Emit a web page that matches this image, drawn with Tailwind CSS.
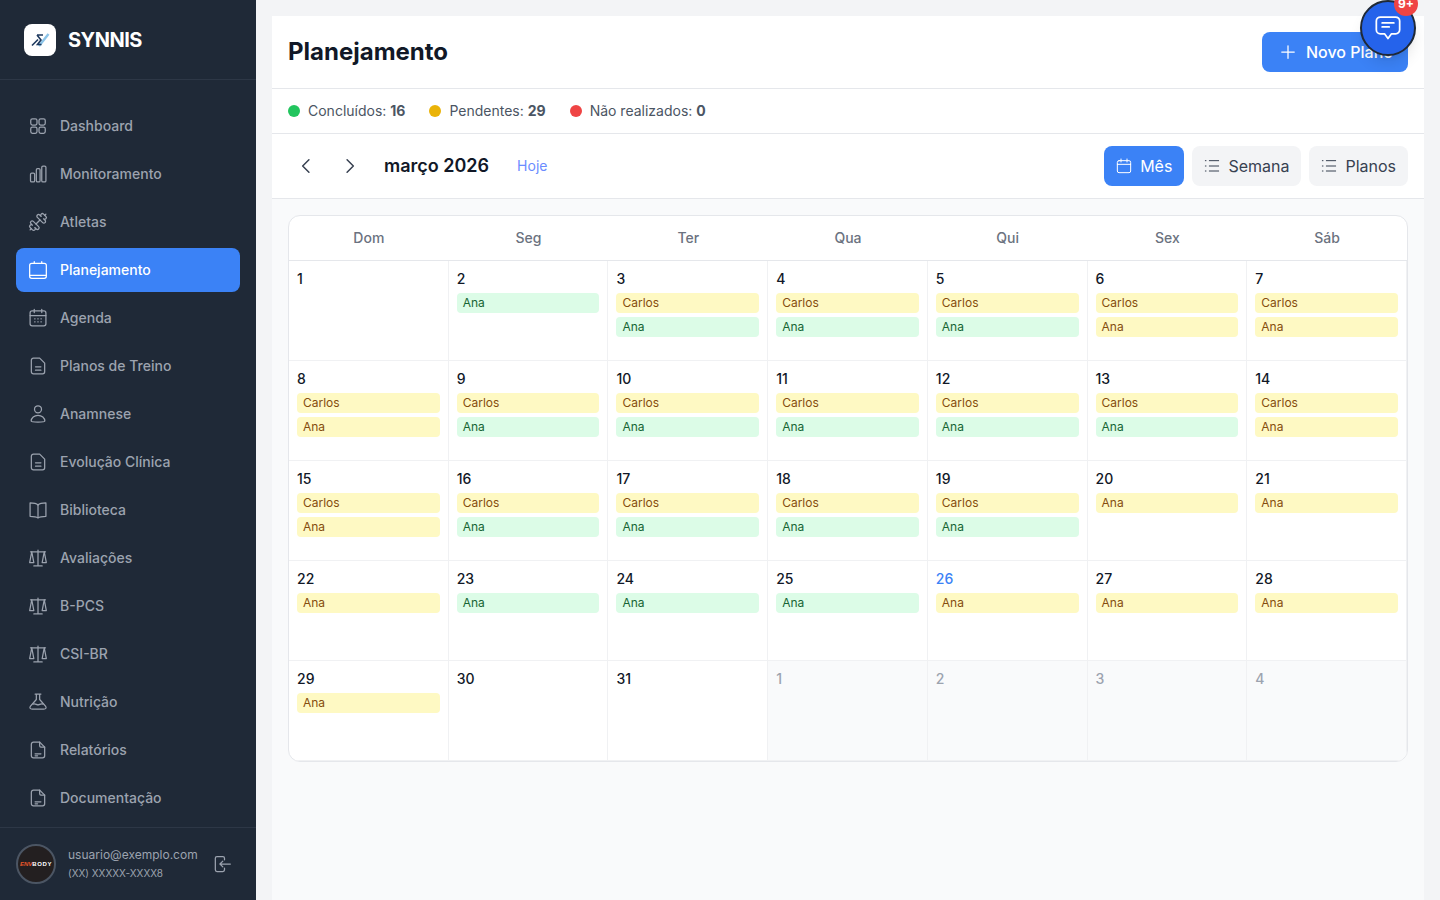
<!DOCTYPE html>
<html lang="pt-BR">
<head>
    <meta charset="UTF-8">
    <title>Planejamento</title>
    <script src="https://cdn.jsdelivr.net/npm/@tailwindcss/browser@4"></script>
</head>
<body class="h-[900px] overflow-hidden bg-gray-50 font-['Inter',sans-serif]">
<svg class="hidden">
    <symbol id="doc" viewBox="0 0 24 24" fill="none" stroke="currentColor" stroke-width="1.5" stroke-linecap="round" stroke-linejoin="round"><path d="M14 2.5H6.500A2.500 2.500 0 0 0 4 5v14a2.500 2.500 0 0 0 2.500 2.500h11A2.500 2.500 0 0 0 20 19V8.500z"/><path d="M9 13h6.500M9 17h6.500"/></symbol>
    <symbol id="report" viewBox="0 0 24 24" fill="none" stroke="currentColor" stroke-width="1.5" stroke-linecap="round" stroke-linejoin="round"><path d="M14 2.500H6.500A2.500 2.500 0 0 0 4 5v14a2.500 2.500 0 0 0 2.500 2.500h11A2.500 2.500 0 0 0 20 19V8.500z"/><path d="M14 2.500V7a1.500 1.500 0 0 0 1.500 1.500H20"/><path d="M8.500 16.500h7M8.500 19h3"/></symbol>
    <symbol id="scale" viewBox="0 0 24 24" fill="none" stroke="currentColor" stroke-width="1.5" stroke-linecap="round" stroke-linejoin="round"><path d="M12 2.500v19M7 21.500h10M3 4.500h18"/><path d="M4.500 4.500 2 17.500h5zM19.500 4.500 17 17.500h5z"/></symbol>
    <symbol id="lines" viewBox="0 0 24 24" fill="none" stroke="currentColor" stroke-width="1.5" stroke-linecap="round"><path d="M8 4h14M8 12h14M8 19.500h14"/><path d="M2 4h1M2 12h1M2 19.500h1"/></symbol>
    <symbol id="cal" viewBox="0 0 24 24" fill="none" stroke="currentColor" stroke-width="1.5" stroke-linecap="round" stroke-linejoin="round"><rect x="2" y="4" width="20" height="18" rx="2.500"/><path d="M2 9.500h20M7.500 1.500V6M16.500 1.500V6"/></symbol>
</svg>
<div class="flex h-[900px]">
    <!-- sidebar -->
    <aside class="w-64 shrink-0 flex flex-col bg-[#1f2937]">
        <div class="h-20 shrink-0 flex items-center gap-3 px-6 border-b border-[#2d3746]">
            <div class="w-8 h-8 rounded-lg bg-white flex items-center justify-center">
                <svg class="w-5 h-5" viewBox="0 0 20 20" fill="none" stroke-width="1.6"><path d="M18.500 4 9 16" stroke="#8cc4e8" stroke-width="2.400"/><path d="M2 15.500 8 9.500M7 5h6M7 5l4 5-3.500 4.500h4" stroke="#1f3a5f"/></svg>
            </div>
            <span class="text-xl font-bold text-white tracking-[-0.5px]">SYNNIS</span>
        </div>
        <nav class="flex-1 pt-6 px-4 flex flex-col gap-1 text-sm font-medium text-[#9ca3af]">
            <a class="h-11 flex items-center gap-3 px-3 rounded-lg">
                <svg class="w-5 h-5" viewBox="0 0 24 24" fill="none" stroke="currentColor" stroke-width="1.5"><rect x="3.300" y="3.300" width="7.500" height="7.500" rx="2"/><rect x="13.200" y="3.300" width="7.500" height="7.500" rx="2"/><rect x="3.300" y="13.200" width="7.500" height="7.500" rx="2"/><rect x="13.200" y="13.200" width="7.500" height="7.500" rx="2"/></svg>
                Dashboard</a>
            <a class="h-11 flex items-center gap-3 px-3 rounded-lg">
                <svg class="w-5 h-5" viewBox="0 0 24 24" fill="none" stroke="currentColor" stroke-width="1.5"><rect x="3" y="11" width="5" height="10.500" rx="1.500"/><rect x="10" y="5.500" width="4.500" height="16" rx="1.500"/><rect x="16.500" y="2.500" width="5" height="19" rx="1.500"/></svg>
                Monitoramento</a>
            <a class="h-11 flex items-center gap-3 px-3 rounded-lg">
                <svg class="w-5 h-5" viewBox="0 0 24 24" fill="none" stroke="currentColor" stroke-width="1.5" stroke-linecap="round" stroke-linejoin="round"><path d="M17.596 12.768a2 2 0 1 0 2.829-2.829l-1.768-1.767a2 2 0 0 0 2.828-2.829l-2.828-2.828a2 2 0 0 0-2.829 2.828l-1.767-1.768a2 2 0 1 0-2.829 2.829z"/><path d="m2.500 21.500 1.400-1.400"/><path d="m20.100 3.900 1.400-1.400"/><path d="M5.343 21.485a2 2 0 1 0 2.829-2.828l1.767 1.768a2 2 0 1 0 2.829-2.829l-6.364-6.364a2 2 0 1 0-2.829 2.829l1.768 1.767a2 2 0 0 0-2.828 2.829z"/><path d="m9.600 14.400 4.800-4.800"/></svg>
                Atletas</a>
            <a class="h-11 flex items-center gap-3 px-3 rounded-lg bg-[#3b82f6] text-white">
                <svg class="w-5 h-5" viewBox="0 0 24 24" fill="none" stroke="currentColor" stroke-width="1.5" stroke-linecap="round"><rect x="2" y="4" width="20" height="18" rx="2.500"/><path d="M2 18.500h20M7.500 2v2M16.500 2v2"/></svg>
                Planejamento</a>
            <a class="h-11 flex items-center gap-3 px-3 rounded-lg">
                <svg class="w-5 h-5" viewBox="0 0 24 24" fill="none" stroke="currentColor" stroke-width="1.5" stroke-linecap="round"><rect x="2.500" y="3.500" width="19" height="18" rx="2.500"/><path d="M2.500 9h19M7.500 1.500v4M16.500 1.500v4M8 13h.5M11.750 13h.5M15.500 13h.5M8 16.500h.5M11.750 16.500h.5M15.500 16.500h.5"/></svg>
                Agenda</a>
            <a class="h-11 flex items-center gap-3 px-3 rounded-lg"><svg class="w-5 h-5"><use href="#doc"/></svg>Planos de Treino</a>
            <a class="h-11 flex items-center gap-3 px-3 rounded-lg">
                <svg class="w-5 h-5" viewBox="0 0 24 24" fill="none" stroke="currentColor" stroke-width="1.5"><circle cx="12" cy="6.300" r="4.200"/><path d="M3.800 20.500c0-4 3.700-7 8.200-7s8.200 3 8.200 7c0 .7-3.700 1.300-8.200 1.300s-8.200-.6-8.200-1.300z" stroke-linejoin="round"/></svg>
                Anamnese</a>
            <a class="h-11 flex items-center gap-3 px-3 rounded-lg"><svg class="w-5 h-5"><use href="#doc"/></svg>Evolução Clínica</a>
            <a class="h-11 flex items-center gap-3 px-3 rounded-lg">
                <svg class="w-5 h-5" viewBox="0 0 24 24" fill="none" stroke="currentColor" stroke-width="1.5" stroke-linejoin="round"><path d="M12 6C10 4 6.500 3.500 2.500 3.500v16c4 0 7.500.5 9.500 2 2-1.500 5.500-2 9.500-2v-16C17.500 3.500 14 4 12 6z"/><path d="M12 6v15.500"/></svg>
                Biblioteca</a>
            <a class="h-11 flex items-center gap-3 px-3 rounded-lg"><svg class="w-5 h-5"><use href="#scale"/></svg>Avaliações</a>
            <a class="h-11 flex items-center gap-3 px-3 rounded-lg"><svg class="w-5 h-5"><use href="#scale"/></svg>B-PCS</a>
            <a class="h-11 flex items-center gap-3 px-3 rounded-lg"><svg class="w-5 h-5"><use href="#scale"/></svg>CSI-BR</a>
            <a class="h-11 flex items-center gap-3 px-3 rounded-lg">
                <svg class="w-5 h-5" viewBox="0 0 24 24" fill="none" stroke="currentColor" stroke-width="1.5" stroke-linecap="round" stroke-linejoin="round"><path d="M8.500 2.500h7M10 2.500V9l-7 8c-1.500 2 -.5 3.500 2 3.500h14c2.500 0 3.500-1.500 2-3.500l-7-8V2.500"/><path d="M6 14.500c3-1 4 1 6 1s3-2 6-1"/></svg>
                Nutrição</a>
            <a class="h-11 flex items-center gap-3 px-3 rounded-lg"><svg class="w-5 h-5"><use href="#report"/></svg>Relatórios</a>
            <a class="h-11 flex items-center gap-3 px-3 rounded-lg"><svg class="w-5 h-5"><use href="#report"/></svg>Documentação</a>
        </nav>
        <div class="h-[73px] shrink-0 border-t border-[#2d3746] flex items-center px-4">
            <div class="w-10 h-10 rounded-full bg-[#231f20] border-2 border-[#4b5563] flex items-center justify-center text-[6px] leading-none font-black font-['Liberation_Sans',sans-serif] text-white overflow-hidden"><span class="italic text-[#e8572a]">ENV</span><span class="tracking-[0.6px]">BODY</span></div>
            <div class="ml-3 text-[#9ca3af]">
                <div class="text-xs leading-4">usuario@exemplo.com</div>
                <div class="text-[10px] leading-4 mt-0.5">(XX) XXXXX-XXXX8</div>
            </div>
            <svg class="w-5 h-5 ml-auto mr-2 text-[#9ca3af]" viewBox="0 0 24 24" fill="none" stroke="currentColor" stroke-width="1.5" stroke-linecap="round" stroke-linejoin="round"><path d="M15 7V5a2 2 0 0 0-2-2H6a2 2 0 0 0-2 2v14a2 2 0 0 0 2 2h7a2 2 0 0 0 2-2v-2"/><path d="M22 12H10M13 8.500 9.500 12l3.500 3.500"/></svg>
        </div>
    </aside>

    <!-- main -->
    <main class="relative flex-1 min-w-0 bg-[#f3f4f6] p-4 pb-0">
        <div class="h-full bg-gray-50 flex flex-col">
            <header class="h-[73px] shrink-0 bg-white border-b border-[#e5e7eb] flex items-center justify-between px-4">
                <h1 class="text-2xl font-bold text-[#111827]">Planejamento</h1>
                <button class="h-10 w-[146px] pl-4 rounded-lg bg-[#3b82f6] text-white flex items-center gap-2 font-medium whitespace-nowrap">
                    <svg class="w-5 h-5" viewBox="0 0 24 24" fill="none" stroke="currentColor" stroke-width="1.5" stroke-linecap="round"><path d="M12 4.500v15M4.500 12h15"/></svg>
                    Novo Plano</button>
            </header>
            <div class="h-[45px] shrink-0 bg-white border-b border-[#e5e7eb] flex items-center gap-6 px-4 text-sm text-[#4b5563]">
                <div class="flex items-center gap-2"><span class="w-3 h-3 rounded-full bg-[#22c55e]"></span><span>Concluídos: <b class="font-bold">16</b></span></div>
                <div class="flex items-center gap-2"><span class="w-3 h-3 rounded-full bg-[#eab308]"></span><span>Pendentes: <b class="font-bold">29</b></span></div>
                <div class="flex items-center gap-2"><span class="w-3 h-3 rounded-full bg-[#ef4444]"></span><span>Não realizados: <b class="font-bold">0</b></span></div>
            </div>
            <div class="h-[65px] shrink-0 bg-white border-b border-[#e5e7eb] flex items-center px-4">
                <button class="w-9 h-9 flex items-center justify-center text-[#374151]">
                    <svg class="w-5 h-5" viewBox="0 0 24 24" fill="none" stroke="currentColor" stroke-width="1.8" stroke-linecap="round" stroke-linejoin="round"><path d="M15.500 4.500 8 12l7.500 7.500"/></svg></button>
                <button class="w-9 h-9 ml-2 flex items-center justify-center text-[#374151]">
                    <svg class="w-5 h-5" viewBox="0 0 24 24" fill="none" stroke="currentColor" stroke-width="1.8" stroke-linecap="round" stroke-linejoin="round"><path d="M8.500 4.500 16 12l-7.500 7.500"/></svg></button>
                <h2 class="ml-4 text-lg font-semibold text-[#111827]">março 2026</h2>
                <a class="ml-7 text-sm text-[#6b8cff]">Hoje</a>
                <div class="ml-auto flex gap-2">
                    <button class="h-10 px-3 rounded-lg bg-[#3b82f6] text-white flex items-center gap-2"><svg class="w-4 h-4"><use href="#cal"/></svg>Mês</button>
                    <button class="h-10 px-3 rounded-lg bg-[#f3f4f6] text-[#374151] flex items-center gap-2"><svg class="w-4 h-4"><use href="#lines"/></svg>Semana</button>
                    <button class="h-10 px-3 rounded-lg bg-[#f3f4f6] text-[#374151] flex items-center gap-2"><svg class="w-4 h-4"><use href="#lines"/></svg>Planos</button>
                </div>
            </div>
            <div class="p-4">
                <div id="calendar" class="bg-white rounded-xl border border-[#e5e7eb] overflow-hidden">
                    <div class="grid grid-cols-7 h-[45px] border-b border-[#e5e7eb] text-sm font-medium text-[#6b7280] text-center items-center">
                        <div>Dom</div><div>Seg</div><div>Ter</div><div>Qua</div><div>Qui</div><div>Sex</div><div>Sáb</div>
                    </div>
                    <div class="grid grid-cols-7 text-sm font-medium text-[#111827]">
                        <!-- week 1 -->
                        <div class="h-[100px] border-r border-b border-[#f0f1f3] p-2">1</div>
                        <div class="h-[100px] border-r border-b border-[#f0f1f3] p-2">2<div class="mt-1 h-5 rounded bg-[#dcfce7] text-[#166534] font-normal text-xs leading-5 px-1.5">Ana</div></div>
                        <div class="h-[100px] border-r border-b border-[#f0f1f3] p-2">3<div class="mt-1 h-5 rounded bg-[#fef9c3] text-[#854d0e] font-normal text-xs leading-5 px-1.5">Carlos</div><div class="mt-1 h-5 rounded bg-[#dcfce7] text-[#166534] font-normal text-xs leading-5 px-1.5">Ana</div></div>
                        <div class="h-[100px] border-r border-b border-[#f0f1f3] p-2">4<div class="mt-1 h-5 rounded bg-[#fef9c3] text-[#854d0e] font-normal text-xs leading-5 px-1.5">Carlos</div><div class="mt-1 h-5 rounded bg-[#dcfce7] text-[#166534] font-normal text-xs leading-5 px-1.5">Ana</div></div>
                        <div class="h-[100px] border-r border-b border-[#f0f1f3] p-2">5<div class="mt-1 h-5 rounded bg-[#fef9c3] text-[#854d0e] font-normal text-xs leading-5 px-1.5">Carlos</div><div class="mt-1 h-5 rounded bg-[#dcfce7] text-[#166534] font-normal text-xs leading-5 px-1.5">Ana</div></div>
                        <div class="h-[100px] border-r border-b border-[#f0f1f3] p-2">6<div class="mt-1 h-5 rounded bg-[#fef9c3] text-[#854d0e] font-normal text-xs leading-5 px-1.5">Carlos</div><div class="mt-1 h-5 rounded bg-[#fef9c3] text-[#854d0e] font-normal text-xs leading-5 px-1.5">Ana</div></div>
                        <div class="h-[100px] border-r border-b border-[#f0f1f3] p-2">7<div class="mt-1 h-5 rounded bg-[#fef9c3] text-[#854d0e] font-normal text-xs leading-5 px-1.5">Carlos</div><div class="mt-1 h-5 rounded bg-[#fef9c3] text-[#854d0e] font-normal text-xs leading-5 px-1.5">Ana</div></div>
                        <!-- week 2 -->
                        <div class="h-[100px] border-r border-b border-[#f0f1f3] p-2">8<div class="mt-1 h-5 rounded bg-[#fef9c3] text-[#854d0e] font-normal text-xs leading-5 px-1.5">Carlos</div><div class="mt-1 h-5 rounded bg-[#fef9c3] text-[#854d0e] font-normal text-xs leading-5 px-1.5">Ana</div></div>
                        <div class="h-[100px] border-r border-b border-[#f0f1f3] p-2">9<div class="mt-1 h-5 rounded bg-[#fef9c3] text-[#854d0e] font-normal text-xs leading-5 px-1.5">Carlos</div><div class="mt-1 h-5 rounded bg-[#dcfce7] text-[#166534] font-normal text-xs leading-5 px-1.5">Ana</div></div>
                        <div class="h-[100px] border-r border-b border-[#f0f1f3] p-2">10<div class="mt-1 h-5 rounded bg-[#fef9c3] text-[#854d0e] font-normal text-xs leading-5 px-1.5">Carlos</div><div class="mt-1 h-5 rounded bg-[#dcfce7] text-[#166534] font-normal text-xs leading-5 px-1.5">Ana</div></div>
                        <div class="h-[100px] border-r border-b border-[#f0f1f3] p-2">11<div class="mt-1 h-5 rounded bg-[#fef9c3] text-[#854d0e] font-normal text-xs leading-5 px-1.5">Carlos</div><div class="mt-1 h-5 rounded bg-[#dcfce7] text-[#166534] font-normal text-xs leading-5 px-1.5">Ana</div></div>
                        <div class="h-[100px] border-r border-b border-[#f0f1f3] p-2">12<div class="mt-1 h-5 rounded bg-[#fef9c3] text-[#854d0e] font-normal text-xs leading-5 px-1.5">Carlos</div><div class="mt-1 h-5 rounded bg-[#dcfce7] text-[#166534] font-normal text-xs leading-5 px-1.5">Ana</div></div>
                        <div class="h-[100px] border-r border-b border-[#f0f1f3] p-2">13<div class="mt-1 h-5 rounded bg-[#fef9c3] text-[#854d0e] font-normal text-xs leading-5 px-1.5">Carlos</div><div class="mt-1 h-5 rounded bg-[#dcfce7] text-[#166534] font-normal text-xs leading-5 px-1.5">Ana</div></div>
                        <div class="h-[100px] border-r border-b border-[#f0f1f3] p-2">14<div class="mt-1 h-5 rounded bg-[#fef9c3] text-[#854d0e] font-normal text-xs leading-5 px-1.5">Carlos</div><div class="mt-1 h-5 rounded bg-[#fef9c3] text-[#854d0e] font-normal text-xs leading-5 px-1.5">Ana</div></div>
                        <!-- week 3 -->
                        <div class="h-[100px] border-r border-b border-[#f0f1f3] p-2">15<div class="mt-1 h-5 rounded bg-[#fef9c3] text-[#854d0e] font-normal text-xs leading-5 px-1.5">Carlos</div><div class="mt-1 h-5 rounded bg-[#fef9c3] text-[#854d0e] font-normal text-xs leading-5 px-1.5">Ana</div></div>
                        <div class="h-[100px] border-r border-b border-[#f0f1f3] p-2">16<div class="mt-1 h-5 rounded bg-[#fef9c3] text-[#854d0e] font-normal text-xs leading-5 px-1.5">Carlos</div><div class="mt-1 h-5 rounded bg-[#dcfce7] text-[#166534] font-normal text-xs leading-5 px-1.5">Ana</div></div>
                        <div class="h-[100px] border-r border-b border-[#f0f1f3] p-2">17<div class="mt-1 h-5 rounded bg-[#fef9c3] text-[#854d0e] font-normal text-xs leading-5 px-1.5">Carlos</div><div class="mt-1 h-5 rounded bg-[#dcfce7] text-[#166534] font-normal text-xs leading-5 px-1.5">Ana</div></div>
                        <div class="h-[100px] border-r border-b border-[#f0f1f3] p-2">18<div class="mt-1 h-5 rounded bg-[#fef9c3] text-[#854d0e] font-normal text-xs leading-5 px-1.5">Carlos</div><div class="mt-1 h-5 rounded bg-[#dcfce7] text-[#166534] font-normal text-xs leading-5 px-1.5">Ana</div></div>
                        <div class="h-[100px] border-r border-b border-[#f0f1f3] p-2">19<div class="mt-1 h-5 rounded bg-[#fef9c3] text-[#854d0e] font-normal text-xs leading-5 px-1.5">Carlos</div><div class="mt-1 h-5 rounded bg-[#dcfce7] text-[#166534] font-normal text-xs leading-5 px-1.5">Ana</div></div>
                        <div class="h-[100px] border-r border-b border-[#f0f1f3] p-2">20<div class="mt-1 h-5 rounded bg-[#fef9c3] text-[#854d0e] font-normal text-xs leading-5 px-1.5">Ana</div></div>
                        <div class="h-[100px] border-r border-b border-[#f0f1f3] p-2">21<div class="mt-1 h-5 rounded bg-[#fef9c3] text-[#854d0e] font-normal text-xs leading-5 px-1.5">Ana</div></div>
                        <!-- week 4 -->
                        <div class="h-[100px] border-r border-b border-[#f0f1f3] p-2">22<div class="mt-1 h-5 rounded bg-[#fef9c3] text-[#854d0e] font-normal text-xs leading-5 px-1.5">Ana</div></div>
                        <div class="h-[100px] border-r border-b border-[#f0f1f3] p-2">23<div class="mt-1 h-5 rounded bg-[#dcfce7] text-[#166534] font-normal text-xs leading-5 px-1.5">Ana</div></div>
                        <div class="h-[100px] border-r border-b border-[#f0f1f3] p-2">24<div class="mt-1 h-5 rounded bg-[#dcfce7] text-[#166534] font-normal text-xs leading-5 px-1.5">Ana</div></div>
                        <div class="h-[100px] border-r border-b border-[#f0f1f3] p-2">25<div class="mt-1 h-5 rounded bg-[#dcfce7] text-[#166534] font-normal text-xs leading-5 px-1.5">Ana</div></div>
                        <div class="h-[100px] border-r border-b border-[#f0f1f3] p-2"><span class="text-[#3b82f6]">26</span><div class="mt-1 h-5 rounded bg-[#fef9c3] text-[#854d0e] font-normal text-xs leading-5 px-1.5">Ana</div></div>
                        <div class="h-[100px] border-r border-b border-[#f0f1f3] p-2">27<div class="mt-1 h-5 rounded bg-[#fef9c3] text-[#854d0e] font-normal text-xs leading-5 px-1.5">Ana</div></div>
                        <div class="h-[100px] border-r border-b border-[#f0f1f3] p-2">28<div class="mt-1 h-5 rounded bg-[#fef9c3] text-[#854d0e] font-normal text-xs leading-5 px-1.5">Ana</div></div>
                        <!-- week 5 -->
                        <div class="h-[100px] border-r border-b border-[#f0f1f3] p-2">29<div class="mt-1 h-5 rounded bg-[#fef9c3] text-[#854d0e] font-normal text-xs leading-5 px-1.5">Ana</div></div>
                        <div class="h-[100px] border-r border-b border-[#f0f1f3] p-2">30</div>
                        <div class="h-[100px] border-r border-b border-[#f0f1f3] p-2">31</div>
                        <div class="h-[100px] border-r border-b border-[#f0f1f3] p-2 bg-gray-50 text-[#9ca3af]">1</div>
                        <div class="h-[100px] border-r border-b border-[#f0f1f3] p-2 bg-gray-50 text-[#9ca3af]">2</div>
                        <div class="h-[100px] border-r border-b border-[#f0f1f3] p-2 bg-gray-50 text-[#9ca3af]">3</div>
                        <div class="h-[100px] border-r border-b border-[#f0f1f3] p-2 bg-gray-50 text-[#9ca3af]">4</div>
                    </div>
                </div>
            </div>
        </div>
        <!-- floating chat button -->
        <button class="absolute top-0 right-[24px] w-14 h-14 rounded-full bg-[#2563eb] border-2 border-[#1f2937] shadow-lg flex items-center justify-center text-white">
            <svg class="w-7 h-7" viewBox="0 0 24 24" fill="none" stroke="currentColor" stroke-width="1.5" stroke-linecap="round" stroke-linejoin="round"><path d="M5.500 2.600h13a3.500 3.500 0 0 1 3.500 3.500v7.400a3.500 3.500 0 0 1-3.500 3.500H15l-3 4-3-4H5.500A3.500 3.500 0 0 1 2 13.500V6.100a3.500 3.500 0 0 1 3.500-3.500z"/><path d="M7 7.700h10M7 11.100h6"/></svg>
            <span class="absolute -top-2.5 -right-1 w-6 h-6 rounded-full bg-[#ef4444] text-xs font-bold flex items-center justify-center leading-none">9+</span>
        </button>
    </main>
</div>
</body>
</html>
